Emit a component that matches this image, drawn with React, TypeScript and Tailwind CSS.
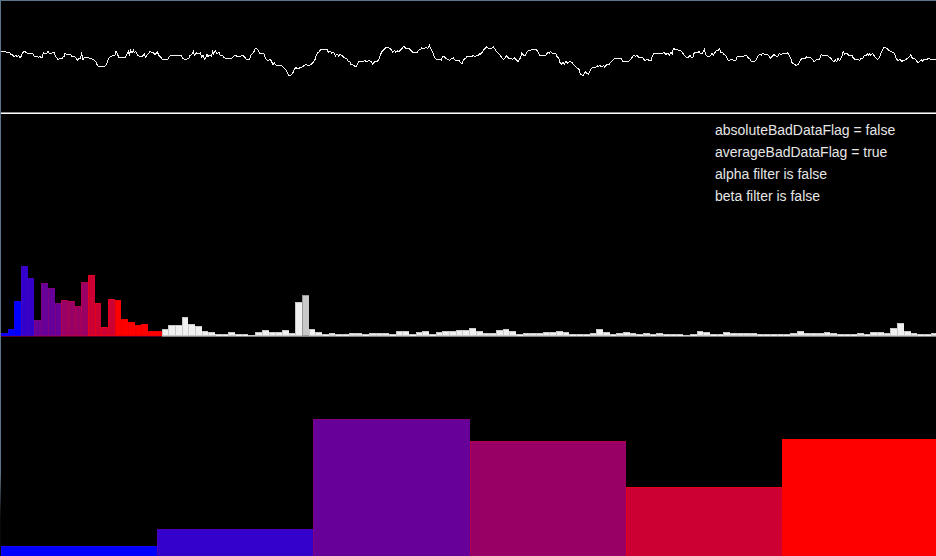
import React from "react";

type Segment = { offset: number; points: string };

// Raw trace samples, stored at three units per pixel.
const segments: Segment[] = [
  {
    offset: 0,
    points:
      "3,65 17,65 20,68 30,69 33,74 36,72 42,80 48,76 52,80 56,77 60,82 64,79 67,70 73,64 78,67 82,70 98,71 102,78 112,80 116,83 119,79 123,83 127,82 130,67 135,72 140,71 144,64 147,70 163,68 166,78 172,86 175,89 178,86 187,85 190,79 193,79 195,68 199,74 212,74 216,79 225,80 229,86 233,91 237,84 241,84 245,71 249,89 253,83 262,81 270,85 282,90 288,96 292,106 297,111 315,109 320,102 325,86 333,79 342,75 345,76 348,64 352,72 357,83 375,83 380,75 385,64 388,74 392,61 396,70 400,61 403,68 407,64 412,75 420,79 428,78 433,73 437,82 440,76 445,72 450,65 458,67 466,74 472,65 476,76 482,81 487,89 502,89 510,78 515,76 520,78 528,75 532,78 543,75 548,85 554,89 567,85 570,76 575,74 580,65 583,75 590,68 597,72 601,69 605,80 609,76 613,88 617,84 621,72 624,80 628,75 634,79 638,64 641,71 646,63 651,71 657,66 660,75 667,75 672,83 680,86 694,86 700,79 705,76 712,79",
  },
  {
    offset: 720,
    points:
      "0,79 8,76 12,79 19,88 29,88 33,75 37,70 41,67 45,57 49,55 56,61 58,69 71,69 74,80 79,89 85,91 90,88 94,93 99,104 103,99 108,105 125,107 131,113 136,118 141,125 146,136 151,136 158,130 163,119 167,112 172,116 182,113 188,110 198,103 206,108 213,103 219,98 225,89 229,76 233,69 237,66 242,59 262,59 265,67 272,64 275,69 281,66 286,78 291,72 296,78 300,72 305,76 311,82 320,86 325,94 329,94 333,104 340,105 345,110 350,108 356,94 371,94 375,91 378,94 388,92 393,94 398,102 405,95 412,95 417,87 421,76 425,65 431,59 437,53 446,54 453,58 458,68 463,61 467,67 472,61 475,66 481,61 485,57 491,49 497,54 505,54 511,59 517,66 532,66 537,60 542,59 545,53 549,57 556,53 560,53 564,55 568,45 573,57 577,66 580,70 583,83 592,89 604,90 608,80 613,80 620,87 629,91 634,86 640,84 645,90 657,90 661,97 666,102 671,89 677,85 682,78 695,80 700,76 705,80 711,76 715,76 719,72",
  },
  {
    offset: 1440,
    points:
      "0,74 5,69 10,61 16,54 20,51 25,55 35,55 40,50 44,56 50,66 58,72 65,82 70,89 74,86 80,77 86,85 93,84 97,89 103,84 110,90 114,95 119,86 122,84 125,68 131,76 137,75 142,64 152,60 158,58 170,60 175,67 180,77 197,77 200,72 205,67 208,70 212,64 217,70 227,70 231,80 237,86 240,98 245,103 249,98 253,103 258,94 263,100 270,94 276,98 281,104 287,110 294,116 299,121 301,134 305,135 311,135 317,124 320,131 326,133 330,122 335,114 347,113 351,107 355,110 360,105 364,111 371,107 375,112 379,105 387,104 391,97 398,91 404,86 423,86 429,94 443,95 452,89 458,79 463,76 467,79 471,76 476,81 486,81 491,87 496,92 502,88 509,92 514,91 517,78 521,70 533,72 538,70 545,71 552,68 558,73 564,69 568,75 573,68 577,73 580,56 590,59 600,61 607,67 611,74 618,81 625,82 630,77 634,82 639,82 643,67 650,69 657,65",
  },
  {
    offset: 2100,
    points:
      "0,69 8,69 13,59 17,75 25,81 33,76 36,69 40,75 44,69 50,61 55,62 58,56 62,66 67,66 71,73 77,77 81,84 85,91 97,88 103,92 108,90 111,80 130,80 134,77 140,75 145,84 150,87 154,95 162,95 168,90 173,79 180,72 184,75 188,70 194,73 202,73 207,78 211,84 217,78 222,73 227,78 234,79 238,70 243,75 248,71 262,71 264,68 268,76 272,84 276,98 284,104 289,106 295,103 300,92 305,86 315,86 320,80 325,84 331,82 335,85 342,95 348,90 358,88 364,73 370,77 382,77 388,81 392,84 397,91 402,95 406,89 410,95 414,84 418,91 422,88 426,77 430,64 434,73 440,70 445,75 455,75 460,84 468,90 474,88 479,91 483,86 488,87 493,77 498,78 502,72 505,76 509,71 513,76 517,70 521,75 524,80 532,89 538,84 543,70 549,56 553,52 562,56 567,62 575,66 583,70 587,82 593,91 600,89 605,94 615,90 625,83 632,75 637,84 646,87 650,93 654,99 659,94 664,90 669,94 673,87 680,89 687,84 692,88 708,88",
  },
];

const tracePoints = segments
  .flatMap(({ offset, points }) =>
    points.split(" ").map((pair) => {
      const [x, y] = pair.split(",").map(Number);
      return `${x + offset},${y}`;
    })
  )
  .join(" ");

// Magnitude of each of the 140 frequency bins, in pixels.
const bins = [
  3, 7, 35, 70, 58, 16, 53, 48, 33, 36, 35, 30, 54, 61, 33, 9, 37, 36, 17, 14,
  11, 12, 5, 5, 7, 11, 11, 19, 12, 10, 5, 4, 2, 2, 4, 2, 2, 1, 4, 6,
  4, 4, 6, 3, 34, 41, 7, 4, 2, 3, 2, 2, 3, 3, 2, 3, 3, 3, 2, 5,
  5, 2, 4, 5, 2, 4, 5, 5, 6, 6, 8, 5, 3, 3, 6, 7, 5, 2, 3, 3,
  3, 4, 4, 5, 4, 2, 2, 2, 3, 7, 4, 2, 3, 4, 3, 2, 3, 2, 3, 2,
  2, 2, 1, 2, 5, 4, 2, 2, 4, 3, 3, 3, 3, 2, 2, 2, 2, 2, 3, 5,
  3, 3, 3, 4, 3, 2, 2, 2, 3, 2, 4, 4, 3, 8, 13, 5, 3, 2, 2, 3,
];

function binColor(index: number): string {
  if (index < 3) return "bg-[#0000ff] border-[#1a00e6]";
  if (index < 5) return "bg-[#3300cc] border-[#4400bb]";
  if (index < 9) return "bg-[#660099] border-[#800080]";
  if (index < 13) return "bg-[#990066] border-[#b3004d]";
  if (index < 17) return "bg-[#cc0033] border-[#e6001a]";
  if (index < 24) return "bg-[#ff0000] border-[#f00000]";
  if (index === 45) return "bg-[#c8c8c8] border-[#969696]";
  return "bg-[#f0f0f0] border-[#c8c8c8]";
}

const bands = [
  { name: "band 1", height: 10, color: "bg-[#0000ff] border-[#1a00ff]" },
  { name: "band 2", height: 27, color: "bg-[#3300cc] border-[#4d00b3]" },
  { name: "band 3", height: 137, color: "bg-[#660099] border-[#800080]" },
  { name: "band 4", height: 115, color: "bg-[#990066] border-[#b3004d]" },
  { name: "band 5", height: 69, color: "bg-[#cc0033] border-[#e6001a]" },
  { name: "band 6", height: 117, color: "bg-[#ff0000] border-[#ff0000]" },
];

const status = [
  "absoluteBadDataFlag = false",
  "averageBadDataFlag = true",
  "alpha filter is false",
  "beta filter is false",
];

function Waveform() {
  return (
    <section className="border-b border-white">
      <svg
        className="block h-[111px] w-full"
        viewBox="3 -87 2805 333"
        preserveAspectRatio="none"
        role="img"
        aria-label="Signal"
      >
        <polyline
          points={tracePoints}
          fill="none"
          stroke="#f4f4f4"
          strokeWidth="1"
          vectorEffect="non-scaling-stroke"
          shapeRendering="crispEdges"
        />
      </svg>
      <div className="h-px bg-[#8c8c8c]" />
    </section>
  );
}

function Spectrum() {
  return (
    <section className="flex h-[223px] flex-col justify-between pt-[5px]">
      <ul className="w-[221px] self-end text-[14px] leading-[22px] text-[#e6e6e6]">
        {status.map((line) => (
          <li key={line}>{line}</li>
        ))}
      </ul>
      <div className="-mr-0.5">
        <div className="flex items-end">
          {bins.map((height, i) => (
            <div
              key={i}
              className={`min-w-0 flex-1 border-t border-l ${
                height > 2 ? "border-b" : ""
              } ${binColor(i)}`}
              style={{ height }}
            />
          ))}
        </div>
        <div className="flex h-px">
          <div className="flex-24 bg-[#500028]" />
          <div className="flex-116 bg-[#808080]" />
        </div>
      </div>
    </section>
  );
}

function Bands() {
  return (
    <section className="-mr-0.5 flex flex-1 items-end">
      {bands.map(({ name, height, color }) => (
        <div
          key={name}
          className={`flex-1 border-t border-l ${color}`}
          style={{ height }}
        />
      ))}
    </section>
  );
}

export default function App() {
  return (
    <div className="flex min-h-screen flex-col bg-linear-to-b from-[#5f7488] from-85% to-[#0a0a0a] to-93% pt-px pl-px font-['Liberation_Sans',Arial,sans-serif]">
      <main className="flex flex-1 flex-col overflow-hidden bg-black">
        <Waveform />
        <Spectrum />
        <Bands />
      </main>
    </div>
  );
}
